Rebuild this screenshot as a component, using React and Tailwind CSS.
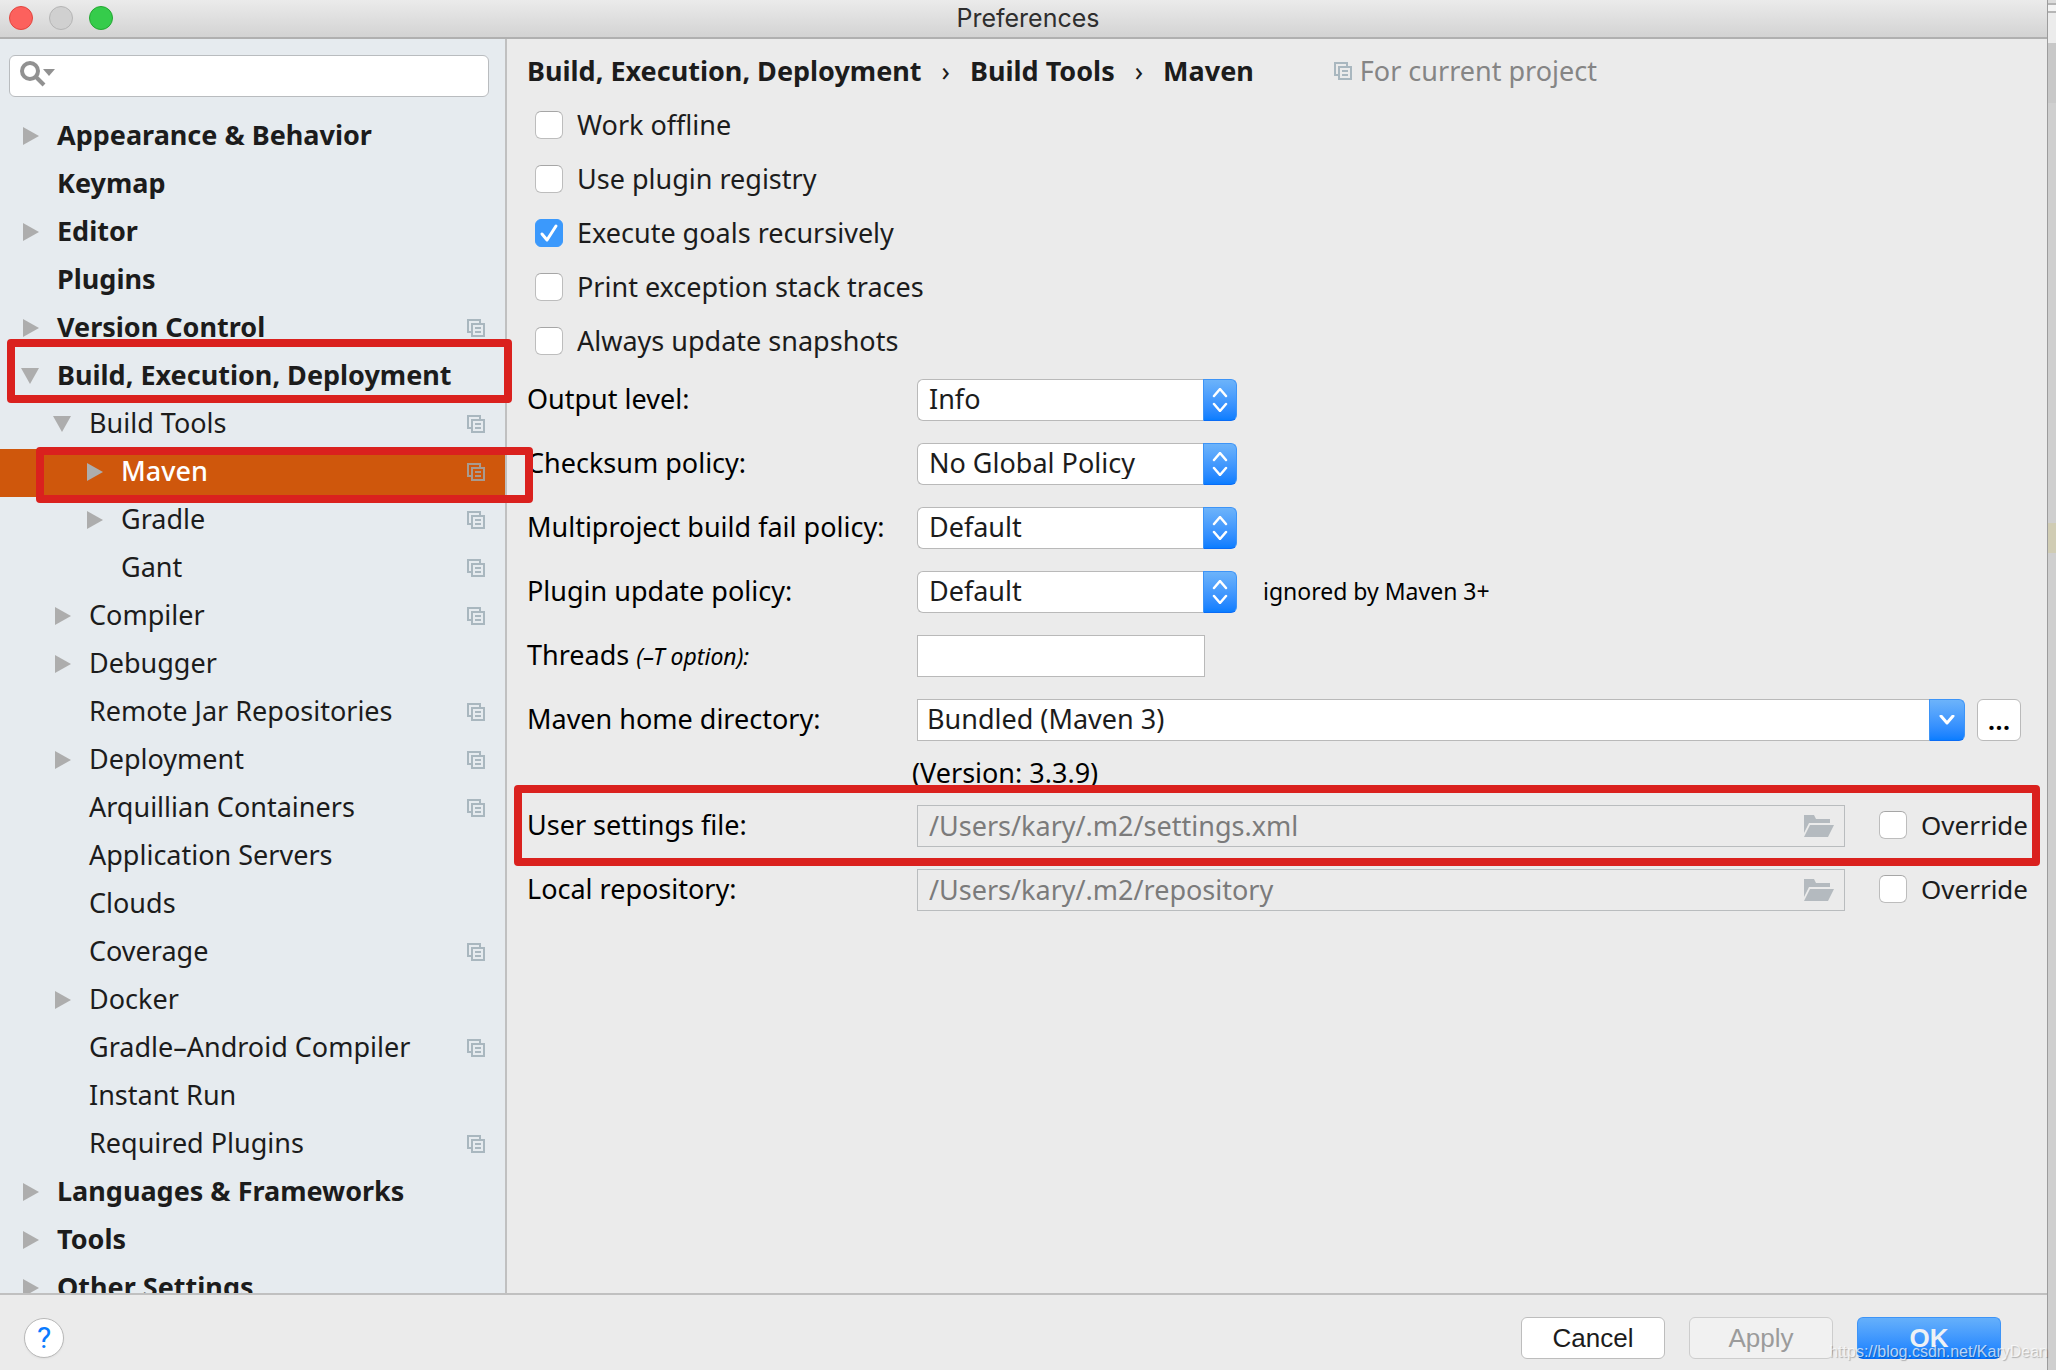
import React, { useState } from 'react';
import clsx from 'clsx';

const TREE = [
  { label: 'Appearance & Behavior', level: 0, arrow: 'right' },
  { label: 'Keymap', level: 0 },
  { label: 'Editor', level: 0, arrow: 'right' },
  { label: 'Plugins', level: 0 },
  { label: 'Version Control', level: 0, arrow: 'right', project: true },
  { label: 'Build, Execution, Deployment', level: 0, arrow: 'down', mark: '-top-3.5 -bottom-0.5 left-[7px] -right-[7px]' },
  { label: 'Build Tools', level: 1, arrow: 'down', project: true },
  { label: 'Maven', level: 2, arrow: 'right', project: true, selected: true, mark: '-top-0.5 -bottom-1.5 left-9 -right-7' },
  { label: 'Gradle', level: 2, arrow: 'right', project: true },
  { label: 'Gant', level: 2, project: true },
  { label: 'Compiler', level: 1, arrow: 'right', project: true },
  { label: 'Debugger', level: 1, arrow: 'right' },
  { label: 'Remote Jar Repositories', level: 1, project: true },
  { label: 'Deployment', level: 1, arrow: 'right', project: true },
  { label: 'Arquillian Containers', level: 1, project: true },
  { label: 'Application Servers', level: 1 },
  { label: 'Clouds', level: 1 },
  { label: 'Coverage', level: 1, project: true },
  { label: 'Docker', level: 1, arrow: 'right' },
  { label: 'Gradle–Android Compiler', level: 1, project: true },
  { label: 'Instant Run', level: 1 },
  { label: 'Required Plugins', level: 1, project: true },
  { label: 'Languages & Frameworks', level: 0, arrow: 'right' },
  { label: 'Tools', level: 0, arrow: 'right' },
  { label: 'Other Settings', level: 0, arrow: 'right' },
];

const INDENT = ['pl-[21px]', 'pl-[53px]', 'pl-[85px]'];

const OPTIONS = [
  { id: 'offline', label: 'Work offline' },
  { id: 'registry', label: 'Use plugin registry' },
  { id: 'recursive', label: 'Execute goals recursively', checked: true },
  { id: 'traces', label: 'Print exception stack traces' },
  { id: 'snapshots', label: 'Always update snapshots' },
];

const POLICIES = [
  { id: 'output', label: 'Output level:', values: ['Info', 'Debug', 'Warn'] },
  { id: 'checksum', label: 'Checksum policy:', values: ['No Global Policy', 'Fail', 'Warn'] },
  { id: 'fail', label: 'Multiproject build fail policy:', values: ['Default', 'Fail Fast', 'Never Fail'] },
  { id: 'update', label: 'Plugin update policy:', values: ['Default', 'Update', 'Do Not Update'], hint: 'ignored by Maven 3+' },
];

function ProjectIcon({ className }) {
  return (
    <svg viewBox="0 0 18 18" className={clsx('size-[18px] shrink-0', className)} fill="none" stroke="currentColor" strokeWidth="2" aria-hidden="true">
      <path d="M4 13H1V1H13V4" />
      <path d="M5 5H17V17H5Z" />
      <path d="M8 9H14M8 13H14" />
    </svg>
  );
}

function Arrow({ dir }) {
  return (
    <svg viewBox="0 0 18 18" className="size-[18px] shrink-0 text-[#adadad]" fill="currentColor" aria-hidden="true">
      {dir === 'right' && <path d="M2 0L18 9L2 18Z" />}
      {dir === 'down' && <path d="M0 1H18L9 17Z" />}
    </svg>
  );
}

function FolderIcon() {
  return (
    <svg viewBox="0 0 30 22" className="h-[22px] w-[30px] shrink-0" fill="#b4babf" aria-hidden="true">
      <path d="M0 0H10L12 4H26V8H5L0 18Z" />
      <path d="M6 10H30L24 22H0Z" />
    </svg>
  );
}

// red frame drawn over a row
function Mark({ className }) {
  return <span className={clsx('pointer-events-none absolute z-20 rounded-sm border-8 border-[#da211e]', className)} />;
}

function Checkbox({ id, label, defaultChecked, className }) {
  const [checked, setChecked] = useState(!!defaultChecked);
  return (
    <div className={clsx('flex items-center gap-3.5', className)}>
      <span className="grid size-7 shrink-0">
        <input
          id={id}
          type="checkbox"
          checked={checked}
          onChange={e => setChecked(e.target.checked)}
          className="col-start-1 row-start-1 size-7 appearance-none rounded-md border border-[#bdbdbd] border-t-[#a6a6a6] bg-white checked:border-[#3b99fc] checked:bg-[#3b99fc]"
        />
        {checked && (
          <svg viewBox="0 0 28 28" className="pointer-events-none col-start-1 row-start-1 size-7" fill="none" stroke="#fff" strokeWidth="3" strokeLinecap="round" strokeLinejoin="round" aria-hidden="true">
            <path d="M7 15L12 21L21 7" />
          </svg>
        )}
      </span>
      <label htmlFor={id} className="whitespace-nowrap text-[#1c1c1c]">{label}</label>
    </div>
  );
}

function FormRow({ id, label, children, className }) {
  return (
    <div className={clsx('relative flex h-16 items-center', className)}>
      <label htmlFor={id} className="w-[390px] shrink-0 pb-0.5 whitespace-nowrap">{label}</label>
      {children}
    </div>
  );
}

function TreeRow({ item }) {
  return (
    <li className={clsx('relative flex h-12 items-center gap-[18px] pr-5 pb-0.5', INDENT[item.level], item.selected && 'bg-[#cf570c]')}>
      <Arrow dir={item.arrow} />
      <span className={clsx('flex-1 pb-0.5 whitespace-nowrap', item.level === 0 && 'font-bold', item.selected ? 'font-medium text-white' : 'text-[#1c1c1c]')}>
        {item.label}
      </span>
      {item.project && <ProjectIcon className={item.selected ? 'text-[#a89a90]' : 'text-[#a9b7bf]'} />}
      {item.mark && <Mark className={item.mark} />}
    </li>
  );
}

function PathRow({ id, label, value, mark }) {
  return (
    <FormRow id={id} label={label}>
      <div className="flex h-[42px] flex-1 items-center border border-[#b9bcbe] pr-2.5 pl-[11px]">
        <input id={id} disabled defaultValue={value} className="h-full min-w-0 flex-1 bg-transparent pb-0.5 text-[#7b7b7b]" />
        <FolderIcon />
      </div>
      <Checkbox id={id + '-override'} label="Override" className="ml-[34px] w-[148px] pb-0.5 text-[26px]" />
      {mark && <Mark className="-top-[9px] -bottom-2 -left-[13px] -right-[13px]" />}
    </FormRow>
  );
}

export default function App() {
  return (
    <div className="relative flex h-screen overflow-hidden bg-[#cfcfcf] font-['Noto_Sans',sans-serif] text-[27px] leading-8 text-black">
      <div className="flex min-w-0 flex-1 flex-col border-r border-[#9c9c9c] bg-[#ebebeb]">
        <header className="grid h-[39px] shrink-0 grid-cols-[1fr_auto_1fr] items-center border-b-2 border-[#b0b0b0] bg-linear-to-b from-[#ebebeb] to-[#d3d3d3] pb-0.5 pl-[9px]">
          <div className="flex gap-4">
            <button aria-label="Close" className="size-6 rounded-full border border-[#e2463f] bg-[#fc615d]" />
            <button aria-label="Minimize" className="size-6 rounded-full border border-[#b5b5b5] bg-[#d0d0d0]" />
            <button aria-label="Zoom" className="size-6 rounded-full border border-[#24a732] bg-[#35cc4b]" />
          </div>
          <h1 className="font-['Inter',sans-serif] text-[25px] text-[#2e2e2e]">Preferences</h1>
        </header>

        <div className="flex min-h-0 flex-1">
          <aside className="relative z-10 flex w-[507px] shrink-0 flex-col overflow-y-clip border-r-2 border-[#c0c0c0] bg-[#e6ebef] pt-4">
            <div className="mr-4 ml-[9px] flex h-[42px] shrink-0 items-center rounded-md border border-[#b9bcbf] bg-white pb-1 pl-2.5">
              <svg viewBox="0 0 36 26" className="h-[26px] w-9 shrink-0" fill="none" aria-hidden="true">
                <circle cx="10" cy="10" r="8" stroke="#919191" strokeWidth="4" />
                <path d="M16 16L24 24" stroke="#919191" strokeWidth="4" />
                <path d="M23 8H35L29 15Z" fill="#919191" />
              </svg>
              <input aria-label="Search settings" className="min-w-0 flex-1 bg-transparent px-2 outline-none" />
            </div>
            <ul className="mt-4">
              {TREE.map(item => <TreeRow key={item.label} item={item} />)}
            </ul>
          </aside>

          <main className="min-w-0 flex-1 px-5 pt-2">
            <div className="flex h-[51px] items-center pb-1 text-[#1c1c1c]">
              <nav className="flex items-center gap-5 font-bold whitespace-nowrap">
                <span>Build, Execution, Deployment</span>
                <span className="font-normal">›</span>
                <span>Build Tools</span>
                <span className="font-normal">›</span>
                <span>Maven</span>
              </nav>
              <ProjectIcon className="ml-20 text-[#a9b7bf]" />
              <span className="ml-2 whitespace-nowrap text-[#858585]">For current project</span>
            </div>

            {OPTIONS.map(o => (
              <Checkbox key={o.id} id={o.id} label={o.label} defaultChecked={o.checked} className="h-[54px] pl-2" />
            ))}

            {POLICIES.map(p => (
              <FormRow key={p.id} id={p.id} label={p.label}>
                <div className="flex h-[42px] w-80 shrink-0">
                  <select id={p.id} className="min-w-0 flex-1 appearance-none rounded-l-md border border-r-0 border-[#b9b9b9] bg-white pb-0.5 pl-[11px] text-[#1c1c1c]">
                    {p.values.map(v => <option key={v}>{v}</option>)}
                  </select>
                  <span className="flex w-[34px] items-center justify-center rounded-r-md border border-[#3d94f7] border-b-[#0a6cf5] bg-linear-to-b from-[#6cb3fa] to-[#097dff]">
                    <svg viewBox="0 0 16 24" className="h-6 w-4" fill="none" stroke="#fff" strokeWidth="2.5" strokeLinecap="round" strokeLinejoin="round" aria-hidden="true">
                      <path d="M2 8L8 1L14 8M2 16L8 23L14 16" />
                    </svg>
                  </span>
                </div>
                {p.hint && <span className="ml-[26px] pb-0.5 text-[23px]">{p.hint}</span>}
              </FormRow>
            ))}

            <FormRow id="threads" label={<>Threads <i className="text-[23px]">(–T option):</i></>}>
              <input id="threads" className="h-[42px] w-72 border border-[#b9b9b9] bg-white px-[11px]" />
            </FormRow>

            <FormRow id="home" label="Maven home directory:" className="pr-1.5">
              <div className="flex h-[42px] flex-1">
                <input id="home" defaultValue="Bundled (Maven 3)" className="min-w-0 flex-1 border border-r-0 border-[#b9b9b9] bg-white pb-0.5 pl-[9px] text-[#1c1c1c]" />
                <button aria-label="Show Maven homes" className="flex w-9 items-center justify-center rounded-r-md border border-[#3d94f7] border-b-[#0a6cf5] bg-linear-to-b from-[#6cb3fa] to-[#097dff]">
                  <svg viewBox="0 0 16 10" className="h-2.5 w-4" fill="none" stroke="#fff" strokeWidth="3" strokeLinecap="round" strokeLinejoin="round" aria-hidden="true">
                    <path d="M2 1L8 8L14 1" />
                  </svg>
                </button>
              </div>
              <button className="ml-3 h-[42px] w-11 rounded-md border border-[#bababa] bg-white font-semibold">...</button>
            </FormRow>

            <p className="h-[42px] pt-[5px] pl-[385px]">(Version: 3.3.9)</p>

            <PathRow id="settings" label="User settings file:" value="/Users/kary/.m2/settings.xml" mark />
            <PathRow id="repo" label="Local repository:" value="/Users/kary/.m2/repository" />
          </main>
        </div>

        <footer className="flex h-[77px] shrink-0 items-center gap-6 border-t-2 border-[#c0c0c0] pt-2.5 pr-[46px] pl-6 font-['Liberation_Sans',sans-serif] text-[26px]">
          <button aria-label="Help" className="mr-auto size-10 rounded-full border border-[#b8b8b8] bg-white font-['Roboto',sans-serif] text-[30px] text-[#0a7bff] shadow-xs">?</button>
          <button className="h-[42px] w-36 rounded-md border border-[#bdbdbd] bg-white text-[#1c1c1c]">Cancel</button>
          <button disabled className="h-[42px] w-36 rounded-md border border-[#cdcdcd] bg-[#f1f1f1] text-[#9b9b9b]">Apply</button>
          <button className="h-[42px] w-36 rounded-md border border-[#3d94f7] border-b-[#0a6cf5] bg-linear-to-b from-[#65b0fb] to-[#097dff] font-bold text-[#eef1f5]">OK</button>
        </footer>
      </div>

      {/* strip of the editor window behind the dialog */}
      <div className="flex w-2 shrink-0 flex-col">
        <div className="h-[3px] bg-[#dcdcdc]" />
        <div className="h-2.5 border-y-2 border-[#b5b5b5] bg-[#f4f4f4]" />
        <div className="h-[30px] bg-[#ececec]" />
        <div className="h-[60px] bg-[#c8c8c8]" />
        <div className="h-[420px]" />
        <div className="h-[30px] bg-[#d0ccb4]" />
      </div>

      <span className="pointer-events-none absolute right-2 bottom-1 z-30 font-['Liberation_Sans',sans-serif] text-base leading-7 text-white/70 [text-shadow:1px_1px_1px_#00000040]">https://blog.csdn.net/KaryDean</span>
    </div>
  );
}
